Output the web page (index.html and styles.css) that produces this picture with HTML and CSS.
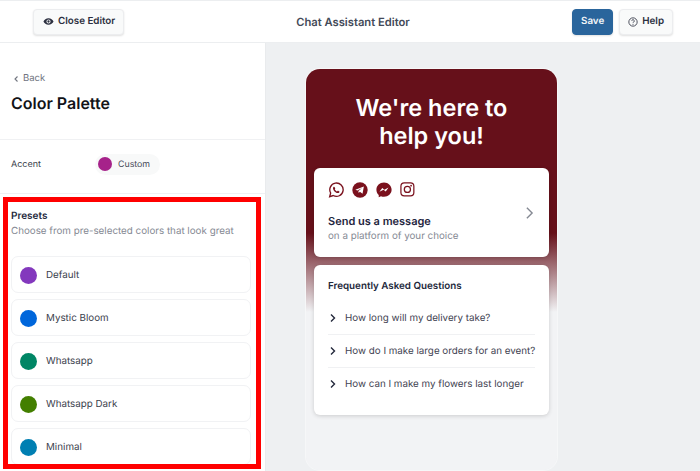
FILE: index.html
```html
<!DOCTYPE html>
<html lang="en">
<head>
    <meta charset="UTF-8">
    <title>Chat Assistant Editor</title>
    <link rel="stylesheet" href="styles.css">
</head>
<body>
    <!-- Top bar -->
    <header class="topbar">
        <div class="topbar-left">
            <button class="btn btn-close">
                <svg class="btn-icon" viewBox="0 0 24 24"><path fill="currentColor" d="M12 5C7 5 2.700 8.100 1 12c1.700 3.900 6 7 11 7s9.300-3.100 11-7c-1.700-3.900-6-7-11-7zm0 11.500a4.500 4.500 0 1 1 0-9 4.500 4.500 0 0 1 0 9zm0-7a2.500 2.500 0 1 0 0 5 2.500 2.500 0 0 0 0-5z"/></svg>
                Close Editor
            </button>
        </div>
        <div class="topbar-title">Chat Assistant Editor</div>
        <div class="topbar-right">
            <button class="btn btn-save">Save</button>
            <button class="btn btn-help">
                <svg class="btn-icon" viewBox="0 0 24 24"><circle cx="12" cy="12" r="10" fill="none" stroke="currentColor" stroke-width="2"/><path fill="none" stroke="currentColor" stroke-width="2" d="M9 9.500a3 3 0 1 1 4.500 2.600c-1 .6-1.500 1.200-1.500 2.400"/><circle cx="12" cy="17.500" r="1.200" fill="currentColor"/></svg>
                Help
            </button>
        </div>
    </header>

    <div class="layout">
        <!-- Left settings panel -->
        <aside class="sidebar">
            <div class="panel-head">
                <a class="back-link" href="#">
                    <svg viewBox="0 0 10 10" class="back-icon"><path d="M6.500 2.500 4 5l2.500 2.500" fill="none" stroke="currentColor" stroke-width="1.100"/></svg>
                    Back
                </a>
                <h1>Color Palette</h1>
            </div>
            <div class="accent-row">
                <span class="accent-label">Accent</span>
                <span class="accent-pill"><span class="dot-small"></span>Custom</span>
            </div>
            <section class="presets">
                <h2>Presets</h2>
                <p>Choose from pre-selected colors that look great</p>
                <ul class="preset-list">
                    <li class="preset"><span class="swatch swatch-default"></span>Default</li>
                    <li class="preset"><span class="swatch swatch-mystic"></span>Mystic Bloom</li>
                    <li class="preset"><span class="swatch swatch-whatsapp"></span>Whatsapp</li>
                    <li class="preset"><span class="swatch swatch-dark"></span>Whatsapp Dark</li>
                    <li class="preset"><span class="swatch swatch-minimal"></span>Minimal</li>
                </ul>
            </section>
            <div class="highlight"></div>
        </aside>

        <!-- Preview -->
        <main class="preview">
            <div class="phone">
                <h2 class="phone-title">We're here to<br>help you!</h2>
                <div class="card card-message">
                    <div class="message-text">
                        <div class="channels">
                            <svg viewBox="0 0 24 24"><path fill="none" stroke="currentColor" stroke-width="2" d="M2.500 22l1.500-5.500A10 10 0 1 1 7.800 20.300z"/><path fill="currentColor" d="M9 7c-.5 0-1.500.8-1.500 2.200 0 3 3.800 7.300 7.600 7.300 1.400 0 2.200-1.100 2.200-1.900 0-.4-2.100-1.600-2.600-1.500-.4.100-.7 1-1.100 1-1 0-3.300-2.200-3.500-3.200 0-.4.800-.8.800-1.200C10.900 9.200 9.800 7 9 7z"/></svg>
                            <svg viewBox="0 0 24 24"><circle cx="12" cy="12" r="11.500" fill="currentColor"/><path fill="#fff" d="M5 11.800 17.800 6.800 15.800 17.500 11.800 14.700 10 16.500 9.600 13.400 15.200 8.900 8.200 12.900z"/></svg>
                            <svg viewBox="0 0 24 24"><path fill="currentColor" d="M12 .8C5.500.8.600 5.500.6 11.600c0 3.200 1.300 6 3.500 7.900V23l3.400-1.800c1.400.5 2.900.8 4.500.8 6.500 0 11.400-4.700 11.400-10.400S18.500.8 12 .8z"/><path fill="#fff" d="M5.200 14.800 9.400 9l3.300 2.500L18.800 8.400l-4.200 5.800-3.300-2.500z"/></svg>
                            <svg viewBox="0 0 26 26"><rect x="1.500" y="1.500" width="21" height="21" rx="5.500" fill="none" stroke="currentColor" stroke-width="2"/><circle cx="12" cy="12" r="5" fill="none" stroke="currentColor" stroke-width="2"/><circle cx="18" cy="6" r="1.400" fill="currentColor"/></svg>
                        </div>
                        <div class="message-title">Send us a message</div>
                        <div class="message-sub">on a platform of your choice</div>
                    </div>
                    <svg class="message-arrow" viewBox="0 0 10 16"><path d="M2 2l6 6-6 6" fill="none" stroke="currentColor" stroke-width="1.600"/></svg>
                </div>
                <div class="card card-faq">
                    <div class="faq-title">Frequently Asked Questions</div>
                    <div class="faq-item"><svg viewBox="0 0 10 10"><path d="M3 1.500 6.500 5 3 8.500" fill="none" stroke="currentColor" stroke-width="1.400"/></svg>How long will my delivery take?</div>
                    <div class="faq-item"><svg viewBox="0 0 10 10"><path d="M3 1.500 6.500 5 3 8.500" fill="none" stroke="currentColor" stroke-width="1.400"/></svg>How do I make large orders for an event?</div>
                    <div class="faq-item"><svg viewBox="0 0 10 10"><path d="M3 1.500 6.500 5 3 8.500" fill="none" stroke="currentColor" stroke-width="1.400"/></svg>How can I make my flowers last longer</div>
                </div>
            </div>
        </main>
    </div>
</body>
</html>
```
FILE: styles.css
```css
* {
    box-sizing: border-box;
}
html, body {
    margin: 0;
    padding: 0;
    height: 471px;
    overflow: hidden;
}
body {
    font-family: 'Inter', sans-serif;
    text-rendering: geometricPrecision;
    background-color: #fff;
    color: #23283b;
}

/* Top bar */
.topbar {
    height: 43px;
    display: grid;
    grid-template-columns: 1fr auto 1fr;
    align-items: center;
    padding: 0 27px 0 33px;
    border-top: 1px solid #eceef0;
    border-bottom: 1px solid #eceef0;
    background-color: #fff;
}
.topbar-right {
    display: flex;
    justify-content: flex-end;
    gap: 6px;
}
.topbar-title {
    font-size: 11.200px;
    font-weight: 600;
    color: #434a58;
}
.btn {
    height: 26px;
    display: inline-flex;
    align-items: center;
    gap: 4px;
    padding: 0 8px;
    font-family: inherit;
    text-rendering: inherit;
    font-size: 9.800px;
    font-weight: 600;
    color: #2c3040;
    background-color: #f9fafa;
    border: 1px solid #ecedef;
    border-radius: 4px;
    box-shadow: 0 1px 2px rgba(0, 0, 0, 0.12);
}
.btn-icon {
    width: 11px;
    height: 11px;
}
.btn-close {
    padding-left: 9px;
}
.btn-save {
    color: #f2f5f8;
    background-color: #2a659c;
    border-color: #2a659c;
}
.btn-help .btn-icon {
    width: 10px;
    height: 10px;
}

/* Page columns */
.layout {
    display: flex;
    height: 428px;
}
.sidebar {
    position: relative;
    width: 266px;
    flex-shrink: 0;
    border-right: 1px solid #e9ebed;
    background-color: #fff;
    overflow: hidden;
}
.panel-head {
    height: 97px;
    padding: 30px 11px 0;
    border-bottom: 1px solid #f0f1f3;
}
.back-link {
    display: flex;
    align-items: center;
    gap: 2px;
    font-size: 9.500px;
    line-height: 12px;
    color: #71757f;
    text-decoration: none;
}
.back-icon {
    width: 10px;
    height: 10px;
}
h1 {
    margin: 7px 0 0;
    font-size: 16px;
    line-height: 22px;
    font-weight: 600;
    color: #111318;
}
.accent-row {
    height: 54px;
    display: flex;
    align-items: center;
    padding: 0 11px 5px;
    border-bottom: 1px solid #f0f1f3;
}
.accent-label {
    width: 84px;
    font-size: 9px;
    color: #3b3f4c;
}
.accent-pill {
    height: 21px;
    width: 65px;
    display: flex;
    align-items: center;
    gap: 6px;
    padding-left: 3px;
    font-size: 8.800px;
    color: #444856;
    background-color: #f8f9f9;
    border-radius: 11px;
}
.dot-small {
    width: 14px;
    height: 14px;
    border-radius: 50%;
    background-color: #a6228a;
}

/* Presets */
.presets {
    padding: 16px 14px 0 11px;
}
.presets h2 {
    margin: 0;
    font-size: 10px;
    line-height: 12px;
    font-weight: 600;
    color: #23283b;
}
.presets p {
    margin: 4px 0 0;
    font-size: 9.800px;
    line-height: 12px;
    color: #858993;
}
.preset-list {
    list-style: none;
    margin: 18px 0 0;
    padding: 0;
    display: flex;
    flex-direction: column;
    gap: 6px;
}
.preset {
    height: 37px;
    display: flex;
    align-items: center;
    gap: 9px;
    padding: 1px 0 0 8px;
    font-size: 9.800px;
    color: #3a3e4c;
    border: 1px solid #f1f2f4;
    border-radius: 7px;
}
.swatch {
    width: 17px;
    height: 17px;
    border-radius: 50%;
}
.swatch-default { background-color: #8338bd; }
.swatch-mystic { background-color: #0066db; }
.swatch-whatsapp { background-color: #008665; }
.swatch-dark { background-color: #437f00; }
.swatch-minimal { background-color: #007fb2; }

/* Red annotation frame */
.highlight {
    position: absolute;
    left: 3px;
    top: 154px;
    width: 258px;
    height: 272px;
    border: 5px solid #ff0000;
}

/* Preview */
.preview {
    flex: 1;
    background-color: #eef0f2;
    padding: 26px 0 0 40px;
}
.phone {
    width: 251px;
    height: 401px;
    padding: 0 8px;
    border-radius: 14px;
    background: linear-gradient(#66101a 0, #66101a 164px, #f2f3f5 243px);
    box-shadow: 0 0 0 1px #f6f7f8;
}
.phone-title {
    margin: 0;
    padding: 25px 0 18px;
    text-align: center;
    font-size: 23.500px;
    line-height: 28px;
    font-weight: 600;
    color: #fff;
}
.card {
    background-color: #fff;
    border-radius: 6px;
    box-shadow: 0 1px 4px rgba(0, 0, 0, 0.16);
}
.card-message {
    height: 89px;
    padding: 14px 14px 0;
    display: flex;
    justify-content: space-between;
    align-items: center;
    margin-bottom: 8px;
}
.message-text {
    align-self: flex-start;
}
.channels {
    display: flex;
    gap: 8px;
    color: #7a111d;
}
.channels svg {
    width: 16px;
    height: 16px;
}
.message-title {
    margin-top: 16px;
    font-size: 11px;
    line-height: 14px;
    font-weight: 600;
    color: #1f2540;
}
.message-sub {
    margin-top: 2px;
    font-size: 9.800px;
    line-height: 13px;
    color: #858993;
}
.message-arrow {
    width: 9px;
    height: 14px;
    margin: 0 1px 13px 0;
    color: #858993;
}
.card-faq {
    height: 150px;
    padding: 16px 14px 0;
}
.faq-title {
    font-size: 9.800px;
    line-height: 12px;
    font-weight: 600;
    color: #23283b;
    margin-bottom: 9px;
}
.faq-item {
    height: 33px;
    display: flex;
    align-items: center;
    gap: 7px;
    font-size: 9.800px;
    color: #3f4352;
    white-space: nowrap;
    border-bottom: 1px solid #f0f1f3;
}
.faq-item:last-child {
    border-bottom: none;
}
.faq-item svg {
    width: 10px;
    height: 10px;
    flex-shrink: 0;
    margin-top: -1px;
    color: #23283b;
}
```
